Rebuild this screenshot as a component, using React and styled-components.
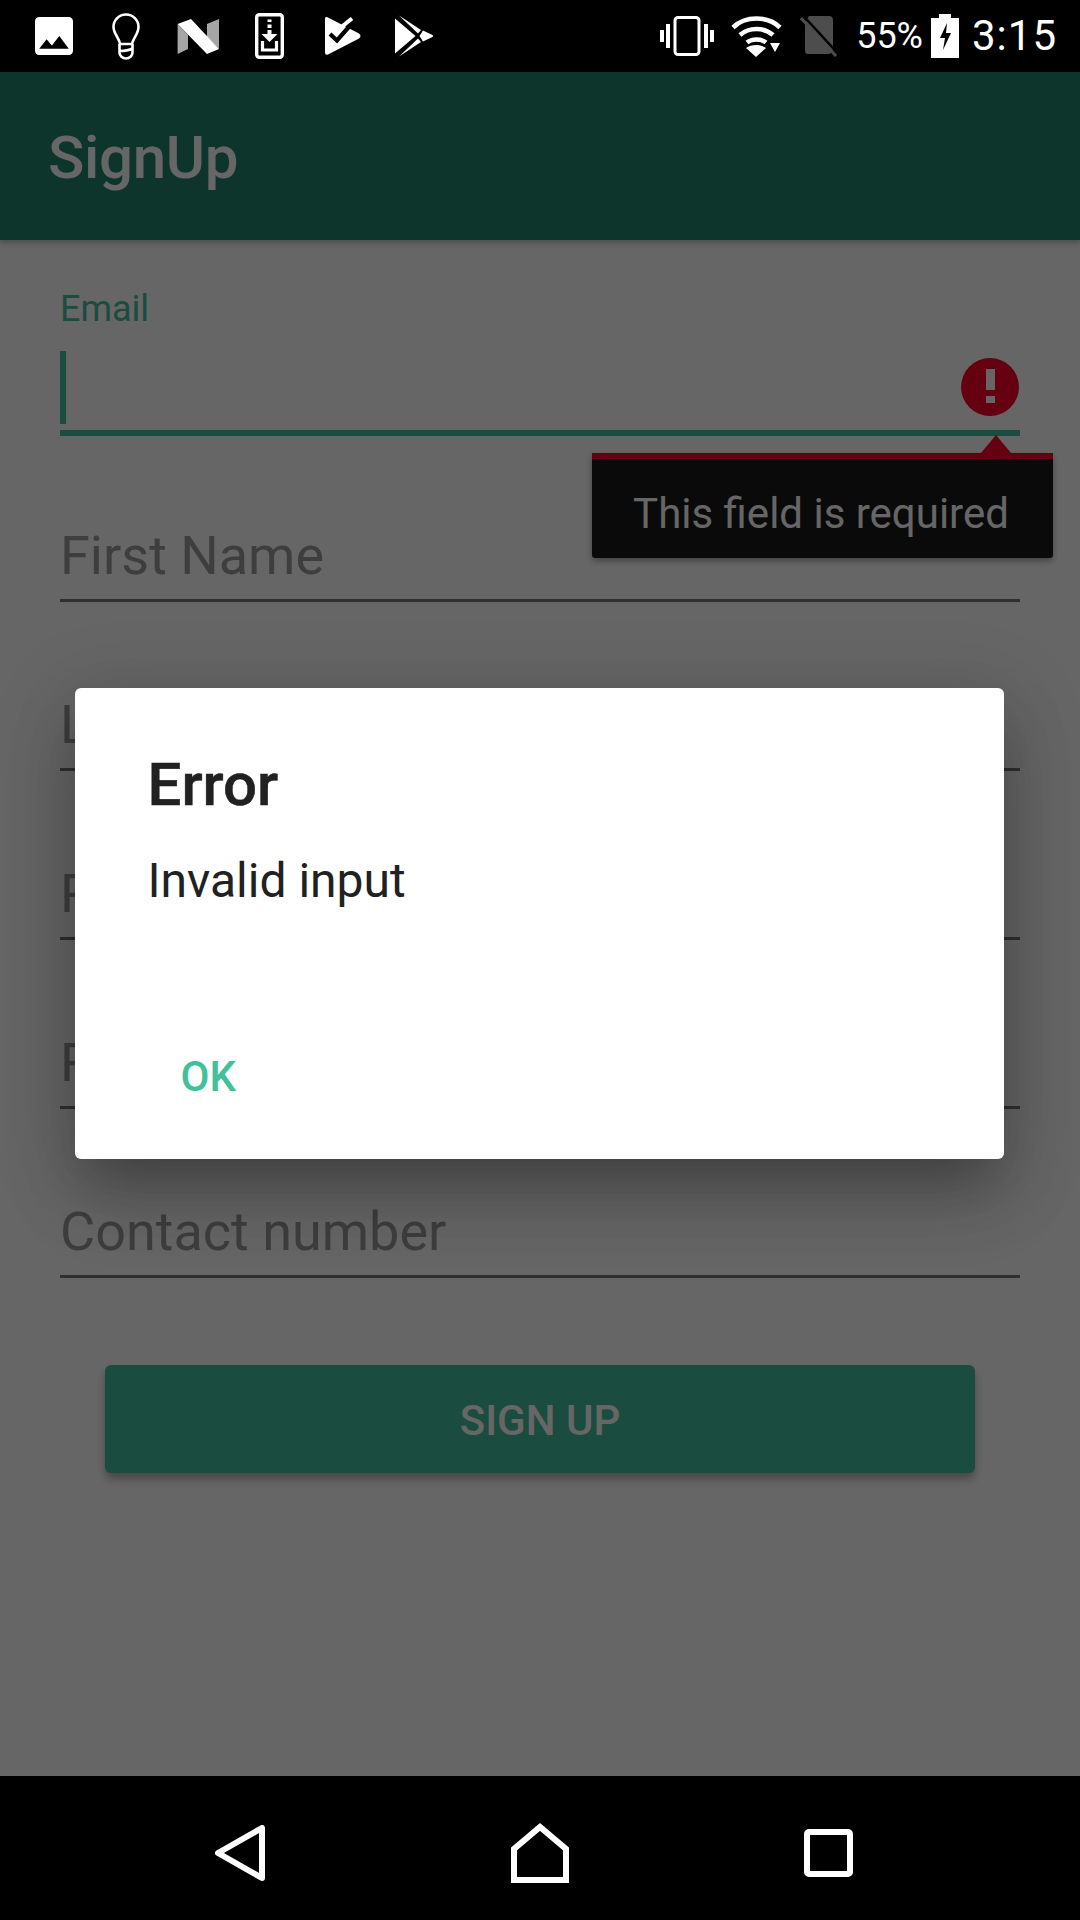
import React from "react";
import styled, { createGlobalStyle } from "styled-components";

const GlobalStyle = createGlobalStyle`
  html, body {
    margin: 0;
    padding: 0;
    background: #fff;
  }
  body {
    font-family: Roboto, "Liberation Sans", sans-serif;
  }
`;

const Screen = styled.div`
  width: 1080px;
  height: 1920px;
  display: flex;
  flex-direction: column;
  overflow: hidden;
`;

const StatusBar = styled.div`
  height: 72px;
  flex: none;
  background: #000;
  color: #fff;
  position: relative;
  z-index: 2;
  display: flex;
  align-items: center;
  padding: 0 23px 0 35px;
`;

const NotifIcons = styled.div`
  display: flex;
  align-items: center;
  flex: 1;
  svg {
    display: block;
    flex: none;
  }
`;

const SystemIcons = styled.div`
  display: flex;
  align-items: center;
  svg {
    display: block;
    flex: none;
  }
`;

const Percent = styled.span`
  font-size: 36px;
  line-height: 72px;
  margin: 0 8px 0 18px;
`;

const Clock = styled.span`
  font-size: 42px;
  line-height: 72px;
  letter-spacing: 1px;
  margin-left: 13px;
`;

const Main = styled.div`
  flex: 1;
  position: relative;
  display: flex;
  flex-direction: column;
  min-height: 0;
`;

const AppBar = styled.header`
  height: 168px;
  flex: none;
  box-sizing: border-box;
  background: #23846b;
  color: #fff;
  display: flex;
  align-items: center;
  padding: 3px 0 0 48px;
  font-size: 60px;
  font-weight: 500;
  letter-spacing: -0.3px;
  box-shadow: 0 3px 6px rgba(0, 0, 0, 0.25);
`;

const Form = styled.main`
  flex: 1;
  padding: 40px 60px 0;
`;

const Field = styled.div`
  height: 169px;
  position: relative;
`;

const Slot = styled.div`
  height: 150px;
  display: flex;
  flex-direction: column;
  justify-content: flex-end;
  padding-bottom: 6px;
  box-sizing: border-box;
`;

const FloatLabel = styled.div`
  font-size: 36px;
  line-height: 40px;
  color: #41c19d;
  margin-bottom: 22px;
`;

const Cursor = styled.div`
  width: 6px;
  height: 73px;
  background: #41c19d;
`;

const Placeholder = styled.div`
  font-size: 54px;
  line-height: 60px;
  color: #9c9c9c;
  margin-bottom: 7px;
  white-space: nowrap;
`;

const Underline = styled.div`
  height: ${(p) => (p.$active ? 6 : 3)}px;
  background: ${(p) => (p.$active ? "#41c19d" : "#757575")};
`;

const ErrorMark = styled.div`
  position: absolute;
  right: 1px;
  top: 78px;
  width: 58px;
  height: 58px;
  svg {
    display: block;
  }
`;

const Tooltip = styled.div`
  position: absolute;
  left: 532px;
  top: 173px;
  width: 461px;
  height: 105px;
  box-sizing: border-box;
  padding-right: 3px;
  background: #191919;
  border-top: 6px solid #fd0028;
  border-radius: 0 0 3px 3px;
  box-shadow: 0 3px 6px rgba(0, 0, 0, 0.35);
  color: #fff;
  font-size: 42px;
  line-height: 109px;
  text-align: center;
  white-space: nowrap;
  &::before {
    content: "";
    position: absolute;
    left: 389px;
    top: -24px;
    border-left: 15px solid transparent;
    border-right: 15px solid transparent;
    border-bottom: 18px solid #fd0028;
  }
`;

const SubmitButton = styled.button`
  display: block;
  width: 870px;
  height: 108px;
  margin: 71px 0 0 45px;
  padding: 2px 0 0;
  border: 0;
  border-radius: 6px;
  background: #41c19d;
  color: #fff;
  font-family: inherit;
  font-size: 42px;
  font-weight: 500;
  box-shadow: 0 6px 9px rgba(0, 0, 0, 0.3);
`;

const Scrim = styled.div`
  position: absolute;
  inset: 0;
  background: rgba(0, 0, 0, 0.6);
  display: flex;
  align-items: center;
  justify-content: center;
  padding: 0 2px 2px 0;
`;

const Dialog = styled.div`
  width: 929px;
  height: 471px;
  box-sizing: border-box;
  background: #fff;
  border-radius: 6px;
  padding: 62px 75px 0 73px;
  color: #212121;
  box-shadow: 0 33px 45px -21px rgba(0, 0, 0, 0.2),
    0 40px 70px 5px rgba(0, 0, 0, 0.14), 0 15px 80px 12px rgba(0, 0, 0, 0.12);
`;

const DialogTitle = styled.div`
  font-size: 60px;
  font-weight: 500;
  line-height: 70px;
  -webkit-text-stroke: 0.5px #212121;
`;

const DialogText = styled.div`
  font-size: 48px;
  line-height: 64px;
  margin-top: 29px;
`;

const DialogAction = styled.div`
  font-size: 42px;
  font-weight: 500;
  line-height: 48px;
  color: #41c19a;
  margin: 140px 0 0 33px;
`;

const NavBar = styled.nav`
  height: 144px;
  flex: none;
  box-sizing: border-box;
  background: #000;
  position: relative;
  z-index: 2;
  padding: 9px 0 0 215px;
  display: grid;
  grid-template-columns: 296px 293px 49px;
  align-items: center;
  svg {
    display: block;
  }
`;

const ImageIcon = () => (
  <svg width="38" height="38" viewBox="3 3 18 18">
    <path
      fill="#fff"
      d="M21 19V5c0-1.1-.9-2-2-2H5c-1.1 0-2 .9-2 2v14c0 1.1.9 2 2 2h14c1.1 0 2-.9 2-2zM8.5 13.5l2.5 3.01L14.5 12l4.5 6H5l3.5-4.5z"
    />
  </svg>
);

const BulbIcon = () => (
  <svg width="28" height="47" viewBox="0 0 28 47" fill="none" stroke="#fff" strokeWidth="2.6" style={{ marginLeft: 39 }}>
    <path d="M8 31C7.5 25 1.5 21 1.5 14a12.5 12.5 0 0 1 25 0c0 7-5.5 11-6.5 17z" />
    <path d="M7.5 31v8.5c0 3.5 3 6 6.5 6s6.500-2.500 6.500-6V31M7.500 38c4 0 9-.5 13-2.500" strokeLinejoin="round" />
  </svg>
);

const NougatIcon = () => (
  <svg width="42" height="35" viewBox="0 0 42 35" style={{ marginLeft: 37 }}>
    <path fill="#a6a6a6" d="M.6 5v30L11 30V16z" />
    <path fill="#a6a6a6" d="M30 5 42 0v30L30 18z" />
    <path fill="#fff" d="M.6 5 14 0l28 30-12 5z" />
  </svg>
);

const DownloadIcon = () => (
  <svg width="29" height="46" viewBox="0 0 29 46" style={{ marginLeft: 36 }}>
    <rect x="1.7" y="1.7" width="25.6" height="42.6" rx="2.5" fill="none" stroke="#fff" strokeWidth="3.4" />
    <path fill="#fff" d="M12.500 6.500h4V9h-4zM12.500 11.500h4V15h-4zM12.500 17h4v4h6l-8 8-8-8h6z" />
    <path fill="none" stroke="#fff" strokeWidth="3.2" d="M7.500 28v9h14v-9" />
  </svg>
);

const PlayCheckIcon = () => (
  <svg width="36" height="38" viewBox="0 0 36 38" style={{ marginLeft: 41 }}>
    <path fill="#fff" d="M2 0 34 16.500q3 2.500 0 5L3 37.500q-3 1-3-2V2q0-2.500 2-2z" />
    <path fill="none" stroke="#000" strokeWidth="4.200" d="M5 17l7 6.500L29 4" />
    <path fill="none" stroke="#fff" strokeWidth="4" d="M14.500 11.500 27 1.500" />
  </svg>
);

const PlayIcon = () => (
  <svg width="39" height="42" viewBox="0 0 39 42" style={{ marginLeft: 34 }}>
    <path
      fill="#fff"
      d="M0 3.500 20.500 21 0 38.500zM4 .5 26 15l-3 3.500zM4 41.500 26 27l-3-3.500zM28 15.500l9.500 4.500q1.500 1 0 2L28 26.500 24.500 21z"
    />
  </svg>
);

const VibrateIcon = () => (
  <svg width="54" height="40" viewBox="0 0 54 40">
    <rect x="15" y="1.5" width="24" height="37" rx="3" fill="none" stroke="#fff" strokeWidth="3" />
    <path fill="#fff" d="M0 14h4v12H0zM6 8h4v24H6zM44 8h4v24h-4zM50 14h4v12h-4z" />
  </svg>
);

const WifiIcon = () => (
  <svg width="51" height="41" viewBox="0 0 51 41" style={{ marginLeft: 17 }}>
    <path fill="none" stroke="#fff" strokeWidth="4.6" d="M2 11.500C14-.500 37-.500 49 11.500M9 19c9-8 24-8 33 0M16 26.500c5-4 14-4 19 0" />
    <path fill="#fff" d="M25 41l-10-9c5-4 15-4 20 0zM39 27h10l-5 9z" />
  </svg>
);

const SimOffIcon = () => (
  <svg width="38" height="41" viewBox="0 0 38 41" style={{ marginLeft: 18 }}>
    <path fill="#4d4d4d" d="M9 0h20q4 0 4 4v31l-2 2q-1 1-3 1H8q-3 0-3-3V7z" />
    <path stroke="#4d4d4d" strokeWidth="3" d="M1 2l35 38" />
    <path stroke="#000" strokeWidth="2.5" d="M3.500 0 38 37.500" />
  </svg>
);

const BatteryIcon = () => (
  <svg width="28" height="44" viewBox="0 0 28 44">
    <path fill="#fff" d="M8 0h12v4h8v40H0V4h8z" />
    <path fill="#000" d="M16 9 9 24h5l-2 12 8-17h-5z" />
  </svg>
);

const BackIcon = () => (
  <svg width="50" height="56" viewBox="0 0 50 56" fill="none" stroke="#fff" strokeWidth="6" strokeLinejoin="round">
    <path d="M47 3v50L3 28z" />
  </svg>
);

const HomeIcon = () => (
  <svg width="58" height="60" viewBox="0 0 58 60" fill="none" stroke="#fff" strokeWidth="6" strokeLinejoin="miter">
    <path d="M3 57V26L29 4l26 22v31z" />
  </svg>
);

const RecentIcon = () => (
  <svg width="49" height="48" viewBox="0 0 49 48">
    <rect x="3" y="3" width="43" height="42" rx="2" fill="none" stroke="#fff" strokeWidth="6" />
  </svg>
);

const fields = ["First Name", "Last Name", "Password", "Retype Password", "Contact number"];

export default function App() {
  return (
    <Screen>
      <GlobalStyle />
      <StatusBar>
        <NotifIcons>
          <ImageIcon />
          <BulbIcon />
          <NougatIcon />
          <DownloadIcon />
          <PlayCheckIcon />
          <PlayIcon />
        </NotifIcons>
        <SystemIcons>
          <VibrateIcon />
          <WifiIcon />
          <SimOffIcon />
          <Percent>55%</Percent>
          <BatteryIcon />
          <Clock>3:15</Clock>
        </SystemIcons>
      </StatusBar>
      <Main>
        <AppBar>SignUp</AppBar>
        <Form>
          <Field>
            <Slot>
              <FloatLabel>Email</FloatLabel>
              <Cursor />
            </Slot>
            <Underline $active />
            <ErrorMark>
              <svg width="58" height="58" viewBox="0 0 58 58">
                <circle cx="29" cy="29" r="29" fill="#fd0028" />
                <path fill="#fff" d="M25 11h9v21h-9zM25 38h9v7h-9z" />
              </svg>
            </ErrorMark>
            <Tooltip>This field is required</Tooltip>
          </Field>
          {fields.map((f) => (
            <Field key={f}>
              <Slot>
                <Placeholder>{f}</Placeholder>
              </Slot>
              <Underline />
            </Field>
          ))}
          <SubmitButton>SIGN UP</SubmitButton>
        </Form>
        <Scrim>
          <Dialog>
            <DialogTitle>Error</DialogTitle>
            <DialogText>Invalid input</DialogText>
            <DialogAction>OK</DialogAction>
          </Dialog>
        </Scrim>
      </Main>
      <NavBar>
        <BackIcon />
        <HomeIcon />
        <RecentIcon />
      </NavBar>
    </Screen>
  );
}
